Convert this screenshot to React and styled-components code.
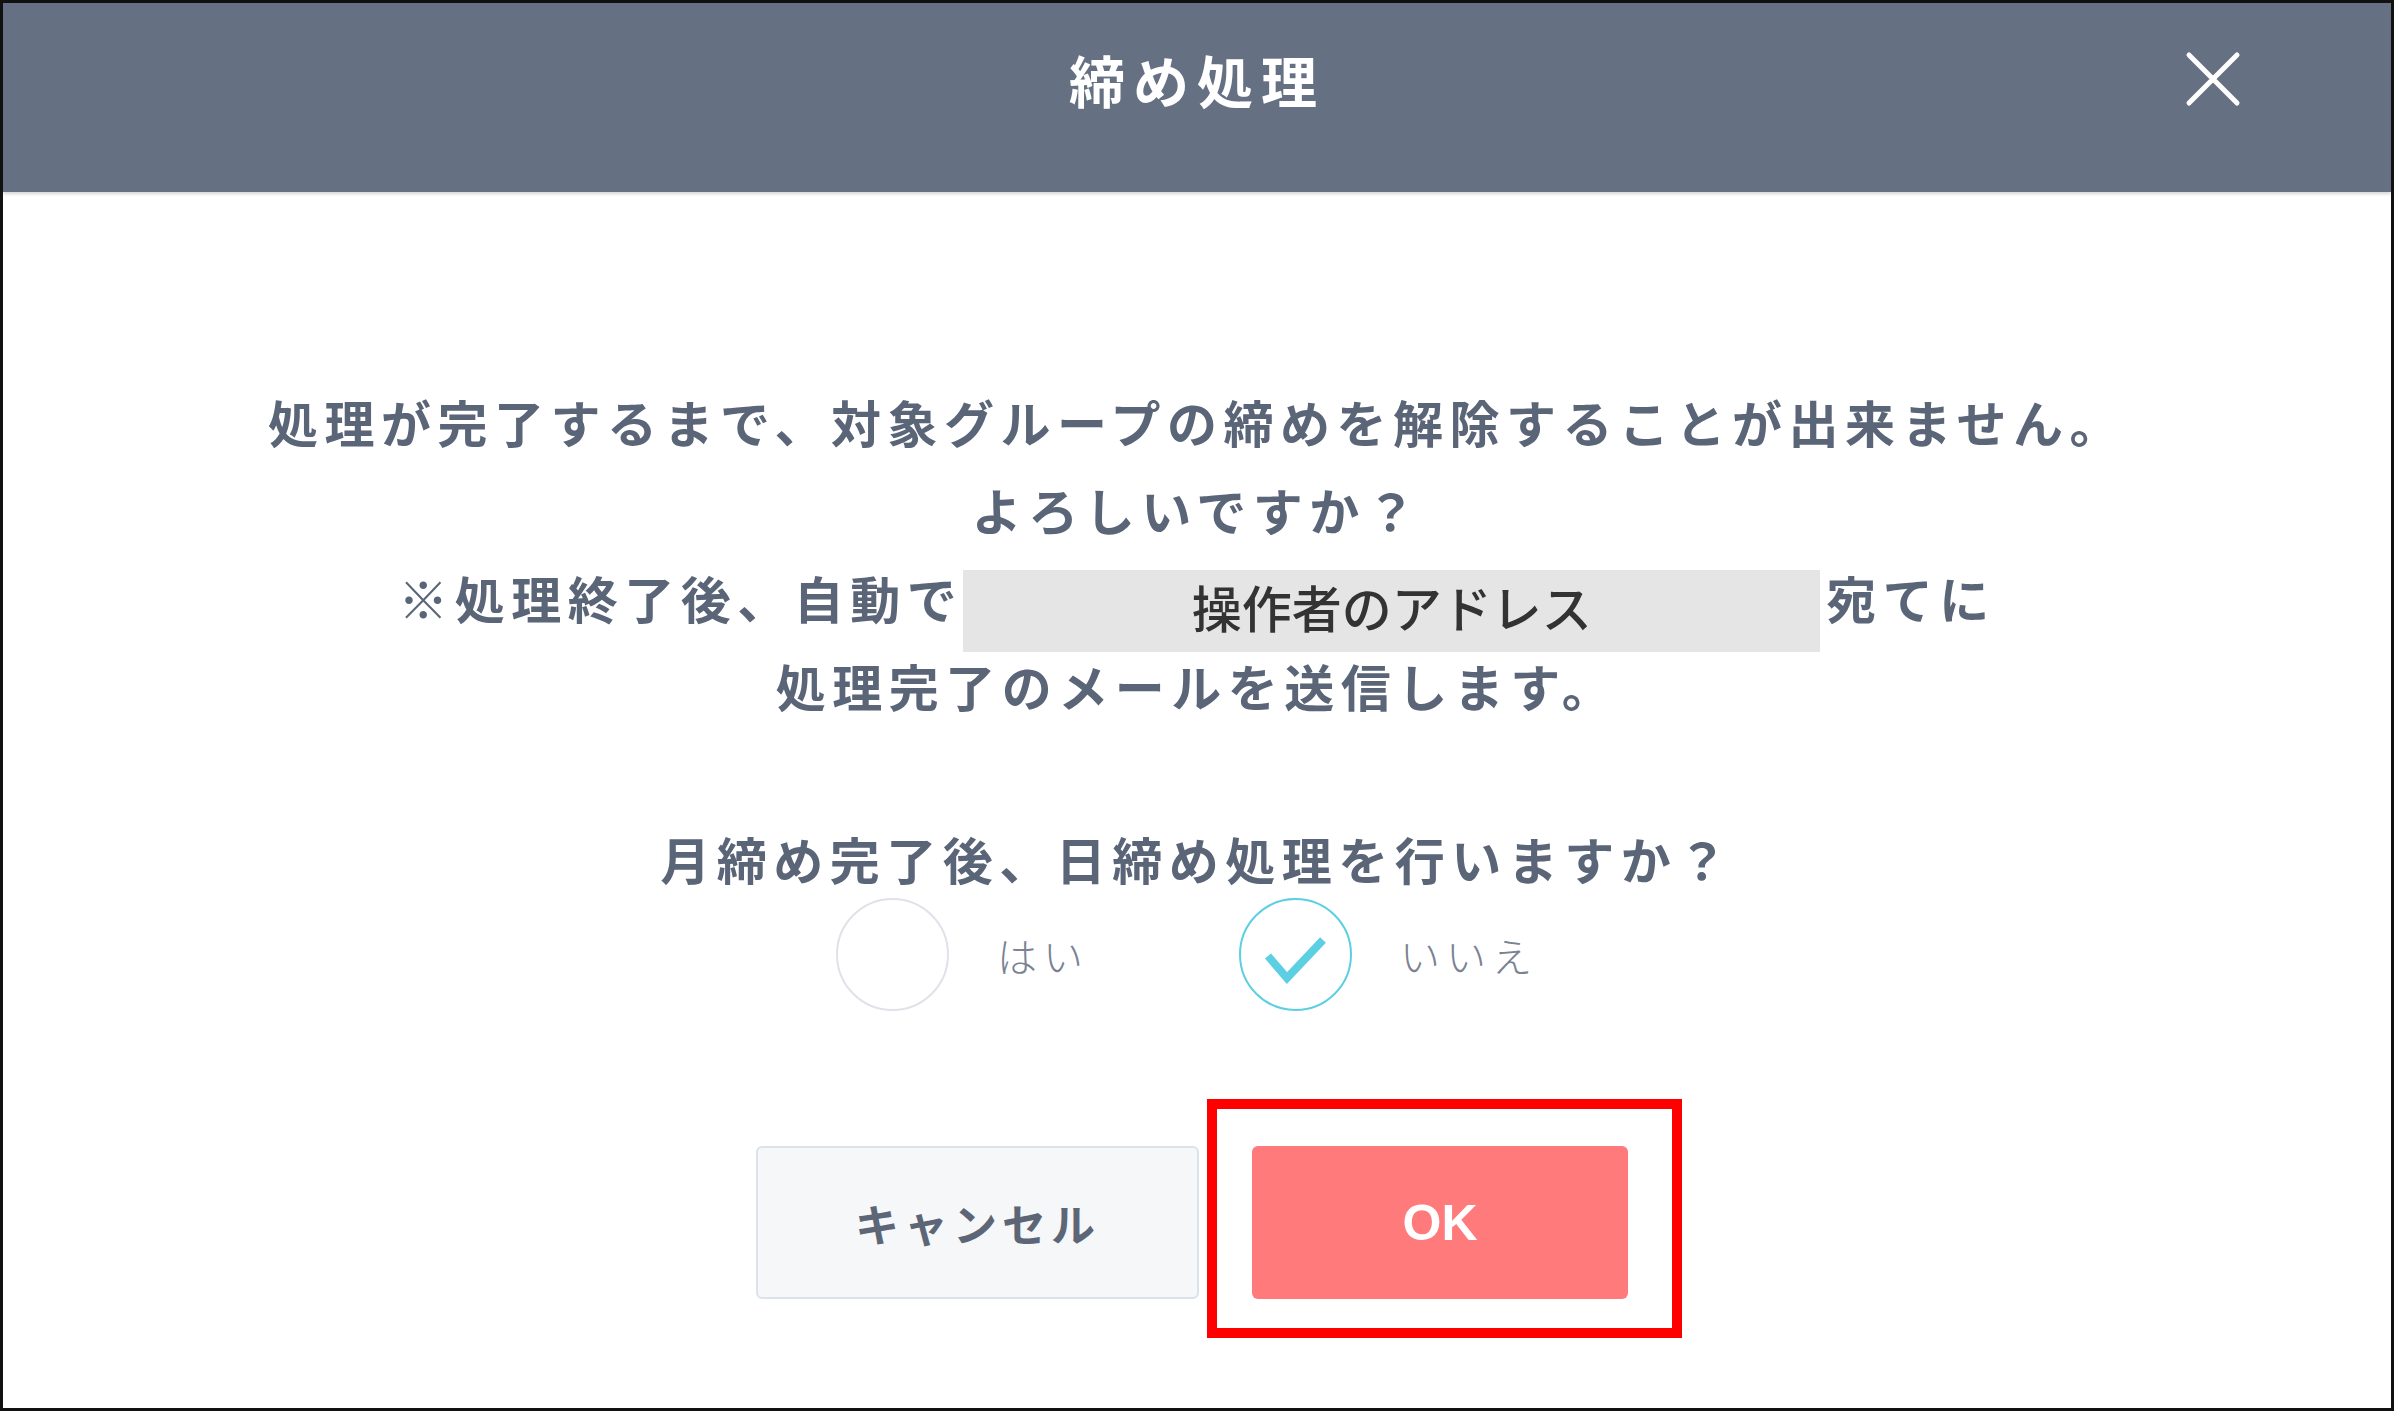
import React from 'react';
import styled, { createGlobalStyle } from 'styled-components';

const GlobalStyle = createGlobalStyle`
    html, body {
        margin: 0;
        padding: 0;
        background: #fff;
    }
    body {
        font-family: 'Noto Sans CJK JP', 'Noto Sans', sans-serif;
    }
`;

function CloseIcon() {
    return (
        <svg width="56" height="56" viewBox="0 0 56 56">
            <path
                d="M4 4 L52 52 M52 4 L4 52"
                stroke="#fff"
                strokeWidth="5"
                strokeLinecap="round"
                fill="none"
            />
        </svg>
    );
}

function Radio({ label, checked }) {
    return (
        <RadioItem>
            <Circle checked={checked}>
                {checked && (
                    <svg width="108" height="108" viewBox="0 0 108 108">
                        <polyline
                            points="26,55 45,77 81,39"
                            fill="none"
                            stroke="#5ccfe2"
                            strokeWidth="8"
                            strokeLinejoin="miter"
                        />
                    </svg>
                )}
            </Circle>
            <RadioLabel>{label}</RadioLabel>
        </RadioItem>
    );
}

function App() {
    return (
        <Frame>
            <GlobalStyle />
            <Header>
                <Title>締め処理</Title>
                <CloseButton aria-label="close">
                    <CloseIcon />
                </CloseButton>
            </Header>
            <Body>
                <Message>
                    処理が完了するまで、対象グループの締めを解除することが出来ません。
                    <br />
                    よろしいですか？
                    <br />
                    ※処理終了後、自動で<Address>操作者のアドレス</Address>宛てに
                    <br />
                    処理完了のメールを送信します。
                </Message>
                <Question>月締め完了後、日締め処理を行いますか？</Question>
                <RadioRow>
                    <Radio label="はい" />
                    <Radio label="いいえ" checked />
                </RadioRow>
                <Actions>
                    <CancelButton>キャンセル</CancelButton>
                    <OkWrap>
                        <OkButton>OK</OkButton>
                        <Highlight />
                    </OkWrap>
                </Actions>
            </Body>
        </Frame>
    );
}

export default App;

const Frame = styled.div`
    box-sizing: border-box;
    width: 2394px;
    height: 1411px;
    border: 3px solid #111;
    display: flex;
    flex-direction: column;
    background: #fff;
    overflow: hidden;
`;

const Header = styled.header`
    box-sizing: border-box;
    height: 189px;
    padding-bottom: 38px;
    background: #667083;
    display: grid;
    grid-template-columns: 1fr auto 1fr;
    align-items: center;
    box-shadow: 0 2px 3px rgba(40, 50, 70, 0.2);
    position: relative;
    z-index: 1;
`;

const Title = styled.h1`
    grid-column: 2;
    margin: 0;
    color: #fff;
    font-size: 56px;
    font-weight: 700;
    letter-spacing: 8px;
    line-height: 1.2;
`;

const CloseButton = styled.button`
    grid-column: 3;
    justify-self: end;
    margin-right: 150px;
    width: 56px;
    height: 56px;
    padding: 0;
    border: 0;
    background: none;
    display: flex;
    cursor: pointer;
`;

const Body = styled.main`
    flex: 1;
    display: flex;
    flex-direction: column;
    align-items: center;
    padding-top: 185px;
    color: #5b6578;
    text-align: center;
`;

const Message = styled.p`
    margin: 0;
    font-size: 50px;
    font-weight: 700;
    letter-spacing: 6.5px;
    line-height: 88px;
`;

const Address = styled.span`
    display: inline-block;
    vertical-align: middle;
    box-sizing: border-box;
    width: 857px;
    height: 82px;
    margin: 0 6px -12px 0;
    background: #e5e5e5;
    color: #333;
    font-size: 50px;
    font-weight: 500;
    letter-spacing: 0;
    line-height: 72px;
    text-align: center;
`;

const Question = styled.p`
    margin: 99px 0 0;
    font-size: 50px;
    font-weight: 700;
    letter-spacing: 6.5px;
    line-height: 60px;
`;

const RadioRow = styled.div`
    display: flex;
    gap: 150px;
    margin-top: 10px;
    padding-right: 20px;
`;

const RadioItem = styled.label`
    display: flex;
    align-items: center;
    gap: 48px;
`;

const Circle = styled.span`
    box-sizing: border-box;
    width: 113px;
    height: 113px;
    border-radius: 50%;
    border: 2.5px solid ${(p) => (p.checked ? '#5ccfe2' : '#dfe2e8')};
    display: flex;
    align-items: center;
    justify-content: center;
`;

const RadioLabel = styled.span`
    font-size: 40px;
    font-weight: 300;
    letter-spacing: 6px;
    color: #7a8293;
`;

const Actions = styled.div`
    display: flex;
    gap: 53px;
    margin-top: 135px;
    padding-right: 10px;
`;

const CancelButton = styled.button`
    box-sizing: border-box;
    width: 443px;
    height: 153px;
    background: #f6f7f9;
    border: 2px solid #dce2ec;
    border-radius: 6px;
    color: #5d6676;
    font-family: 'Noto Sans CJK JP', sans-serif;
    font-size: 44px;
    font-weight: 700;
    letter-spacing: 5px;
    cursor: pointer;
`;

const OkWrap = styled.div`
    position: relative;
`;

const OkButton = styled.button`
    width: 376px;
    height: 153px;
    background: #ff7a7a;
    border: 0;
    border-radius: 6px;
    color: #fff;
    font-family: 'Liberation Sans', Arial, sans-serif;
    font-size: 50px;
    font-weight: 700;
    cursor: pointer;
`;

const Highlight = styled.div`
    position: absolute;
    left: -45px;
    top: -47px;
    width: 475px;
    height: 239px;
    box-sizing: border-box;
    border: 10px solid #ff0000;
    pointer-events: none;
`;
